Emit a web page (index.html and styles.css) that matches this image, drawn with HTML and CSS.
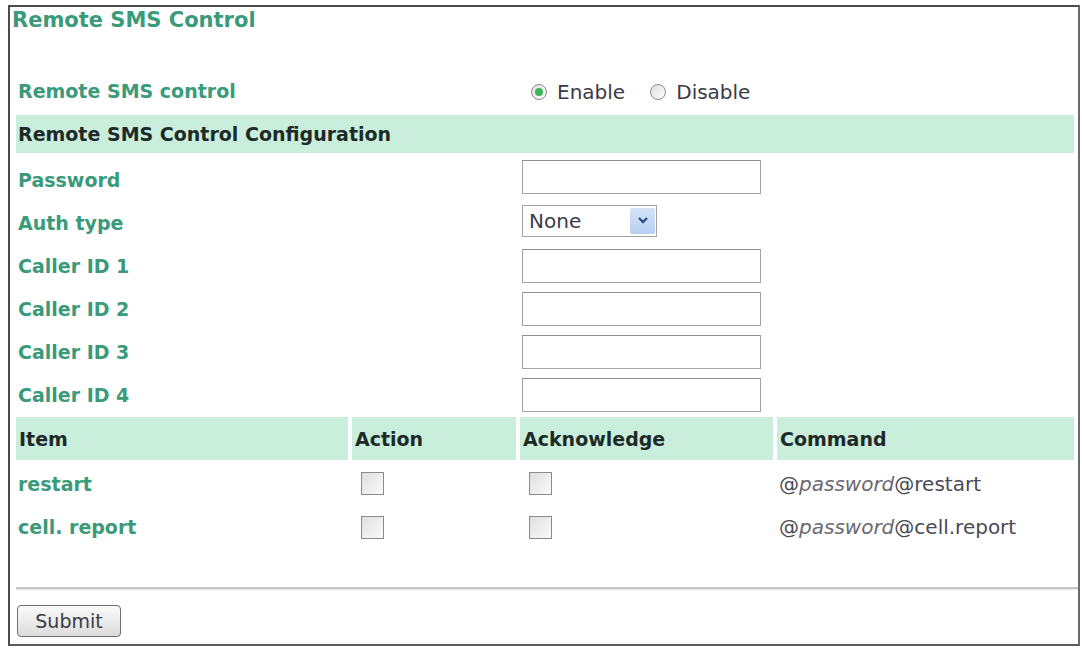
FILE: index.html
```html
<!DOCTYPE html>
<html lang="en">
<head>
  <meta charset="UTF-8">
  <title>Remote SMS Control</title>
  <link rel="stylesheet" href="styles.css">
</head>
<body>

  <div class="frame">
    <div class="page-title">Remote SMS Control</div>

    <form class="sms-form" onsubmit="return false;">
      <table class="grid">
        <colgroup>
          <col class="c-item">
          <col class="c-action">
          <col class="c-ack">
          <col class="c-cmd">
        </colgroup>
        <tr class="row-toggle">
          <td colspan="2" class="label">Remote SMS control</td>
          <td colspan="2" class="value">
            <label class="radio"><input type="radio" name="sms" checked> Enable</label>
            <label class="radio"><input type="radio" name="sms"> Disable</label>
          </td>
        </tr>
        <tr class="band band-title">
          <td colspan="4">Remote SMS Control Configuration</td>
        </tr>
        <tr class="row-first">
          <td colspan="2" class="label">Password</td>
          <td colspan="2" class="value"><input type="text" class="field"></td>
        </tr>
        <tr class="row">
          <td colspan="2" class="label">Auth type</td>
          <td colspan="2" class="value">
            <span class="select-wrap">
              <select class="select">
                <option>None</option>
                <option>PAP</option>
                <option>CHAP</option>
              </select>
              <span class="select-btn">
                <svg width="12" height="9" viewBox="0 0 12 9"><path d="M2 2 L6 6 L10 2" fill="none" stroke="#2b4f86" stroke-width="2.4"/></svg>
              </span>
            </span>
          </td>
        </tr>
        <tr class="row">
          <td colspan="2" class="label">Caller ID 1</td>
          <td colspan="2" class="value"><input type="text" class="field"></td>
        </tr>
        <tr class="row">
          <td colspan="2" class="label">Caller ID 2</td>
          <td colspan="2" class="value"><input type="text" class="field"></td>
        </tr>
        <tr class="row">
          <td colspan="2" class="label">Caller ID 3</td>
          <td colspan="2" class="value"><input type="text" class="field"></td>
        </tr>
        <tr class="row row-last">
          <td colspan="2" class="label">Caller ID 4</td>
          <td colspan="2" class="value"><input type="text" class="field"></td>
        </tr>
        <tr class="band band-head">
          <td>Item</td>
          <td>Action</td>
          <td>Acknowledge</td>
          <td>Command</td>
        </tr>
        <tr class="row-cmd row-cmd-first">
          <td class="label">restart</td>
          <td class="check"><input type="checkbox" class="box"></td>
          <td class="check"><input type="checkbox" class="box"></td>
          <td class="cmd">@<i>password</i>@restart</td>
        </tr>
        <tr class="row-cmd">
          <td class="label">cell. report</td>
          <td class="check"><input type="checkbox" class="box"></td>
          <td class="check"><input type="checkbox" class="box"></td>
          <td class="cmd">@<i>password</i>@cell.report</td>
        </tr>
      </table>

      <div class="divider"></div>

      <div class="actions">
        <button type="submit" class="btn">Submit</button>
      </div>
    </form>
  </div>

</body>
</html>
```

FILE: styles.css
```css
:root {
  --green: #3a9a79;
  --band: #c9efdc;
  --ink: #1d2a28;
  --text: #3b3b45;
  --field-border: #a3a3a3;
}
body {
  margin: 5px 2px 2px 8px;
  font-family: "DejaVu Sans", Verdana, sans-serif;
  background: #fff;
}
.frame {
  box-sizing: border-box;
  height: 641px;
  border: 2px solid #4a4a4a;
  border-right-color: #6a6a6a;
  border-bottom-color: #5a5a5a;
  background: #fff;
}
.page-title {
  height: 59px;
  padding: 1px 0 0 2px;
  box-sizing: border-box;
  color: var(--green);
  font-weight: bold;
  font-size: 21px;
}
.grid {
  border-collapse: separate;
  border-spacing: 4px 0;
  margin-left: 2px;
  table-layout: fixed;
  width: 1066px;
}
.c-item { width: 332px; }
.c-action { width: 164px; }
.c-ack { width: 253px; }
.c-cmd { width: auto; }
.grid td {
  padding: 0 0 0 2px;
  vertical-align: middle;
  white-space: nowrap;
}
.label {
  color: var(--green);
  font-weight: bold;
  font-size: 19px;
}
.row-toggle { height: 49px; }
.row-first { height: 48px; }
.row-first .label { padding-top: 5px; }
.row { height: 43px; }
.row-last { height: 44px; }
.band td {
  background: var(--band);
  color: var(--ink);
  font-weight: bold;
  font-size: 19px;
}
.band-title { height: 38px; }
.band-head { height: 43px; }
.band-head td { padding-left: 3px; }
.row-cmd { height: 40px; }
.row-cmd-first { height: 47px; }
.grid td.value { padding-left: 2px; }
.radio {
  display: inline-flex;
  align-items: center;
  gap: 10px;
  margin: 2px 14px 0 9px;
  font-size: 20px;
  color: var(--text);
}
.radio + .radio { margin-left: 6px; }
.radio input {
  appearance: none;
  margin: 0;
  width: 16px;
  height: 16px;
  border: 1px solid #8a8a8a;
  border-radius: 50%;
  background: linear-gradient(135deg, #e0e0e0, #fcfcfc);
  position: relative;
}
.radio input:checked::after {
  content: "";
  position: absolute;
  left: 3px;
  top: 3px;
  width: 8px;
  height: 8px;
  border-radius: 50%;
  background: #3fb45c;
}
.field {
  box-sizing: border-box;
  width: 239px;
  height: 34px;
  margin: 0;
  border: 1px solid var(--field-border);
  border-top-color: #8e8e8e;
  font: 18px "DejaVu Sans", sans-serif;
  padding: 0 4px;
}
.select-wrap {
  position: relative;
  display: inline-block;
  vertical-align: middle;
  top: -2px;
}
.select {
  appearance: none;
  box-sizing: border-box;
  width: 135px;
  height: 32px;
  margin: 0;
  border: 1px solid var(--field-border);
  background: #fff;
  font: 20px "DejaVu Sans", sans-serif;
  color: var(--text);
  padding: 0 6px;
}
.select-btn {
  position: absolute;
  right: 2px;
  top: 3px;
  width: 25px;
  height: 26px;
  background: linear-gradient(#d4e3f8, #b9cff0);
  border-radius: 2px;
  display: flex;
  align-items: center;
  justify-content: center;
  pointer-events: none;
}
.grid td.check { padding-left: 9px; }
.box {
  appearance: none;
  margin: 0;
  width: 23px;
  height: 23px;
  border: 1px solid #8c8c8c;
  background: linear-gradient(135deg, #dedede, #fbfbfb);
  vertical-align: middle;
}
.cmd {
  font-size: 20px;
  color: #4a4a52;
}
.cmd i {
  color: #6a6a72;
}
.divider {
  margin: 40px 0 0 6px;
  border-top: 2px solid #c6c6c6;
  border-bottom: 1px solid #e6e6e6;
}
.actions {
  padding: 15px 0 0 7px;
}
.btn {
  width: 104px;
  height: 32px;
  border: 1px solid #6e6e6e;
  border-radius: 4px;
  background: linear-gradient(#fafafa, #dcdcdc);
  font: 19px "DejaVu Sans", sans-serif;
  color: var(--text);
  padding: 0;
  cursor: pointer;
}
```
